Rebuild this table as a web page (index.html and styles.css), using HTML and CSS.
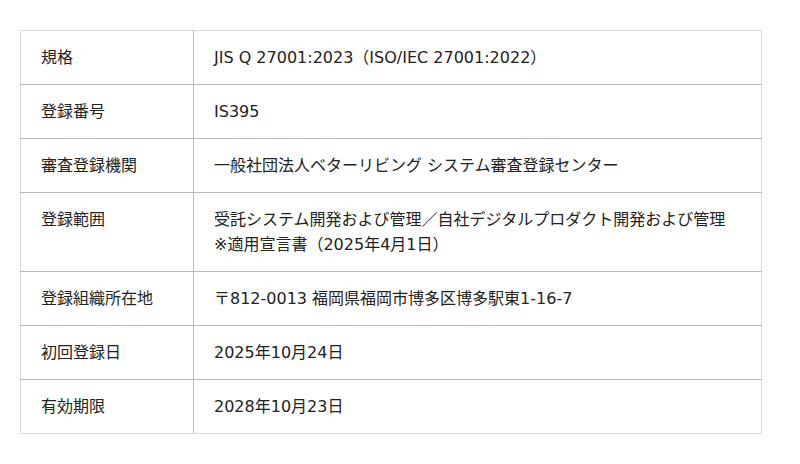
FILE: index.html
```html
<!DOCTYPE html>
<html lang="ja">
<head>
<meta charset="utf-8">
<link rel="stylesheet" href="styles.css">
</head>
<body>
<div class="wrap">
<table class="info">
<tbody>
<tr><th>規格</th><td>JIS Q 27001:2023（ISO/IEC 27001:2022）</td></tr>
<tr><th>登録番号</th><td>IS395</td></tr>
<tr><th>審査登録機関</th><td>一般社団法人ベターリビング システム審査登録センター</td></tr>
<tr><th>登録範囲</th><td>受託システム開発および管理／自社デジタルプロダクト開発および管理<br>※適用宣言書（2025年4月1日）</td></tr>
<tr><th>登録組織所在地</th><td>〒812-0013 福岡県福岡市博多区博多駅東1-16-7</td></tr>
<tr><th>初回登録日</th><td>2025年10月24日</td></tr>
<tr><th>有効期限</th><td>2028年10月23日</td></tr>
</tbody>
</table>
</div>
</body>
</html>
```
FILE: styles.css
```css
html, body { margin: 0; padding: 0; background: #fff; }
body {
  font-family: "DejaVu Sans", "Noto Sans CJK JP", sans-serif;
  font-size: 16px;
  color: #222;
}
.wrap { padding: 30px 38px 0 20px; }
.info {
  width: 742px;
  border-collapse: collapse;
  border: 1px solid #ddd;
}
.info th, .info td {
  text-align: left;
  font-weight: normal;
  vertical-align: top;
  padding: 14px 20px;
  line-height: 25px;
  border-bottom: 1px solid #bbb;
}
.info tr:last-child th, .info tr:last-child td { border-bottom: 1px solid #ddd; }
.info th { width: 132px; border-right: 1px solid #bbb; }
```
